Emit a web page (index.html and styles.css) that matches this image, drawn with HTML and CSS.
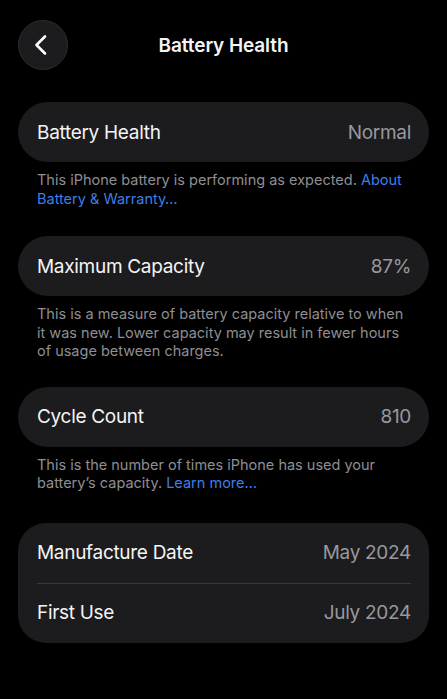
FILE: index.html
```html
<!DOCTYPE html>
<html lang="en">
<head>
    <meta charset="UTF-8">
    <meta name="viewport" content="width=device-width, initial-scale=1.0">
    <title>Battery Health</title>
    <link rel="stylesheet" href="styles.css">
</head>
<body>
    <header class="nav">
        <button class="back" aria-label="Back">
            <svg width="22" height="22" viewBox="0 0 22 22" fill="none">
                <path d="M14 2.5 L5.5 11 L14 19.5" stroke="#fff" stroke-width="2.6" stroke-linecap="round" stroke-linejoin="round"/>
            </svg>
        </button>
        <h1>Battery Health</h1>
    </header>

    <section class="group">
        <div class="card">
            <div class="row">
                <span class="label">Battery Health</span>
                <span class="value">Normal</span>
            </div>
        </div>
        <p class="note">This iPhone battery is performing as expected. <a href="#">About Battery &amp; Warranty…</a></p>
    </section>

    <section class="group">
        <div class="card">
            <div class="row">
                <span class="label">Maximum Capacity</span>
                <span class="value">87%</span>
            </div>
        </div>
        <p class="note">This is a measure of battery capacity relative to when it was new. Lower capacity may result in fewer hours of usage between charges.</p>
    </section>

    <section class="group">
        <div class="card">
            <div class="row">
                <span class="label">Cycle Count</span>
                <span class="value">810</span>
            </div>
        </div>
        <p class="note">This is the number of times iPhone has used your battery’s capacity. <a href="#">Learn more…</a></p>
    </section>

    <section class="group">
        <div class="card list">
            <div class="row">
                <span class="label">Manufacture Date</span>
                <span class="value">May 2024</span>
            </div>
            <div class="row">
                <span class="label">First Use</span>
                <span class="value">July 2024</span>
            </div>
        </div>
    </section>
</body>
</html>
```

FILE: styles.css
```css
body {
    margin: 0;
    padding: 20px 18px 0;
    background: #000;
    color: #f4f4f5;
    font-family: Inter, "Noto Sans", sans-serif;
}

.nav {
    position: relative;
    height: 50px;
    display: flex;
    align-items: center;
    justify-content: center;
    margin-bottom: 32px;
}
.nav h1 {
    margin: 0;
    font-size: 19px;
    font-weight: 600;
    letter-spacing: -0.1px;
}
.back {
    position: absolute;
    left: 0;
    top: 0;
    width: 50px;
    height: 50px;
    border-radius: 50%;
    background: #1c1c1e;
    border: 1px solid #2c2c2e;
    display: flex;
    align-items: center;
    justify-content: center;
    padding: 0 2px 0 0;
}

.group { margin-bottom: 28px; }
.group:nth-of-type(2) { margin-bottom: 26px; }
.group:nth-of-type(3) { margin-bottom: 30px; }

.card {
    background: #1c1c1e;
    border-radius: 30px;
}
.card.list { border-radius: 28px; }

.row {
    height: 60px;
    display: flex;
    align-items: center;
    justify-content: space-between;
    padding: 0 18px 0 19px;
    font-size: 19px;
    letter-spacing: -0.3px;
}
.list .row + .row { position: relative; }
.list .row + .row::before {
    content: "";
    position: absolute;
    top: 0;
    left: 19px;
    right: 18px;
    height: 1px;
    background: #38383a;
}
.value { color: #98989e; }

.note {
    margin: 0;
    padding: 9px 18px 0 19px;
    font-size: 14.5px;
    line-height: 18.5px;
    color: #8e8e93;
}
.note a {
    color: #3f7ee8;
    text-decoration: none;
}
```
